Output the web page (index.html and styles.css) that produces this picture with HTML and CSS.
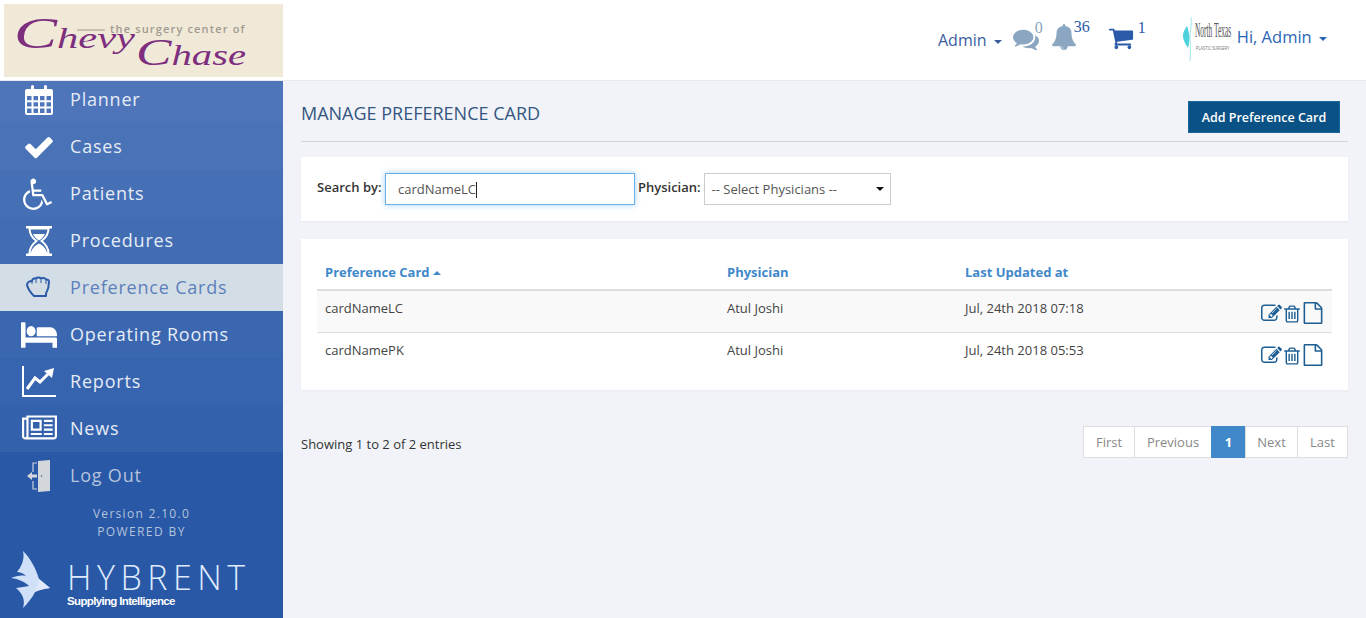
FILE: index.html
```html
<!DOCTYPE html>
<html lang="en">
<head>
    <meta charset="UTF-8">
    <meta name="viewport" content="width=device-width, initial-scale=1.0">
    <title>Manage Preference Card</title>
    <link rel="stylesheet" href="styles.css">
</head>
<body>
    <svg class="icon-defs" width="0" height="0">
        <symbol id="i-edit" viewBox="0 0 1792 1792"><path d="M888 1184l116-116-152-152-116 116v56h96v96h56zm440-720q-16-16-33 1l-350 350q-17 17-1 33t33-1l350-350q17-17 1-33zm80 594v190q0 119-84.500 203.500t-203.500 84.500h-832q-119 0-203.500-84.500t-84.500-203.500v-832q0-119 84.500-203.500t203.500-84.500h832q63 0 117 25 15 7 18 23 3 17-9 29l-49 49q-14 14-32 8-23-6-45-6h-832q-66 0-113 47t-47 113v832q0 66 47 113t113 47h832q66 0 113-47t47-113v-126q0-13 9-22l64-64q15-15 35-7t20 29zm-96-738l288 288-672 672h-288v-288zm444 132l-92 92-288-288 92-92q28-28 68-28t68 28l152 152q28 28 28 68t-28 68z"/></symbol>
        <symbol id="i-trash" viewBox="0 0 1792 1792"><path d="M704 736v576q0 14-9 23t-23 9h-64q-14 0-23-9t-9-23v-576q0-14 9-23t23-9h64q14 0 23 9t9 23zm256 0v576q0 14-9 23t-23 9h-64q-14 0-23-9t-9-23v-576q0-14 9-23t23-9h64q14 0 23 9t9 23zm256 0v576q0 14-9 23t-23 9h-64q-14 0-23-9t-9-23v-576q0-14 9-23t23-9h64q14 0 23 9t9 23zm128 724v-948h-896v948q0 22 7 40.500t14.500 27 10.500 8.500h832q3 0 10.500-8.500t14.500-27 7-40.500zm-672-1076h448l-48-117q-7-9-17-11h-317q-10 2-17 11zm928 32v64q0 14-9 23t-23 9h-96v948q0 83-47 143.500t-113 60.500h-832q-66 0-113-60.500t-47-141.500v-950h-96q-14 0-23-9t-9-23v-64q0-14 9-23t23-9h309l70-167q15-37 54-63t79-26h320q40 0 79 26t54 63l70 167h309q14 0 23 9t9 23z"/></symbol>
        <symbol id="i-file" viewBox="0 0 1792 1792"><path d="M1596 380q28 28 48 76t20 88v1152q0 40-28 68t-68 28h-1344q-40 0-68-28t-28-68v-1600q0-40 28-68t68-28h896q40 0 88 20t76 48zm-444-244v376h376q-10-29-22-41l-313-313q-12-12-41-22zm384 1528v-1024h-416q-40 0-68-28t-28-68v-416h-768v1536h1280z"/></symbol>
    </svg>

    <header class="topbar">
        <svg class="clinic-logo" viewBox="0 0 279 73" width="279" height="73">
            <rect width="279" height="73" fill="#f0e9d8"/>
            <line x1="73" y1="26" x2="101" y2="26" stroke="#a09a90" stroke-width="1"/>
            <text x="106" y="29" class="logo-small" textLength="135">the surgery center of</text>
            <text x="10" y="44" class="logo-script" textLength="121" lengthAdjust="spacingAndGlyphs"><tspan class="logo-cap">C</tspan>hevy</text>
            <text x="132" y="61" class="logo-script" textLength="110" lengthAdjust="spacingAndGlyphs"><tspan class="logo-cap-small">C</tspan>hase</text>
        </svg>
        <div class="top-links">
            <a class="top-role">Admin <span class="caret"></span></a>
            <svg class="top-icon icon-comments" viewBox="0 0 1792 1792" width="26" height="26"><path d="M1408 768q0 139-94 257t-256.500 186.500-353.500 68.500q-86 0-176-16-124 88-278 128-36 9-86 16h-3q-11 0-20.500-8t-11.500-21q-1-3-1-6.500t.5-6.500 2-6l2.500-5 3.500-5.500 4-5 4.500-5 4-4.500q5-6 23-25t26-29.500 22.500-29 25-38.500 20.500-44q-124-72-195-177t-71-224q0-139 94-257t256.500-186.500 353.500-68.500 353.500 68.500 256.500 186.500 94 257zm384 256q0 120-71 224.500t-195 176.500q10 24 20.500 44t25 38.500 22.500 29 26 29.500 23 25q1 1 4 4.500t4.500 5 4 5 3.500 5.500l2.500 5 2 6 .5 6.500-1 6.500q-3 14-13 22t-22 7q-50-7-86-16-154-40-278-128-90 16-176 16-271 0-472-132 58 4 88 4 161 0 309-45t264-129q125-92 192-212t67-254q0-77-23-152 129 71 204 178t75 230z"/></svg>
            <span class="count count-muted">0</span>
            <svg class="top-icon icon-bell" viewBox="0 0 1792 1792" width="26" height="26"><path d="M912 1696q0-16-16-16-59 0-101.500-42.500t-42.500-101.500q0-16-16-16t-16 16q0 73 51.500 124.500t124.500 51.500q16 0 16-16zm816-288q0 52-38 90t-90 38h-448q0 106-75 181t-181 75-181-75-75-181h-448q-52 0-90-38t-38-90q50-42 91-88t85-119.500 74.500-158.500 50-206 19.500-260q0-152 117-282.500t307-158.500q-8-19-8-39 0-40 28-68t68-28 68 28 28 68q0 20-8 39 190 28 307 158.500t117 282.500q0 139 19.500 260t50 206 74.500 158.500 85 119.500 91 88z"/></svg>
            <span class="count count-bell">36</span>
            <svg class="top-icon icon-cart" viewBox="0 0 1792 1792" width="26" height="26"><path d="M704 1536q0 52-38 90t-90 38-90-38-38-90 38-90 90-38 90 38 38 90zm896 0q0 52-38 90t-90 38-90-38-38-90 38-90 90-38 90 38 38 90zm128-1088v512q0 24-16.500 42.500t-40.500 21.500l-1044 122q13 60 13 70 0 16-24 64h920q26 0 45 19t19 45-19 45-45 19h-1024q-26 0-45-19t-19-45q0-11 8-31.500t16-36 21.500-40 15.500-29.500l-177-823h-204q-26 0-45-19t-19-45 19-45 45-19h256q16 0 28.500 6.500t19.500 15.500 13 24.500 8 26 5.500 29.500 4.500 26h1201q26 0 45 19t19 45z"/></svg>
            <span class="count count-cart">1</span>
            <svg class="user-logo" viewBox="0 0 50 44" width="50" height="44">
                <path d="M8 0c1 8-1 14-1 21s1 14 0 23" fill="none" stroke="#9fe6ec" stroke-width="1"/>
                <path d="M4 9c-6 8-5 13 1 22 2-8 2-14-1-22z" fill="#4fd0dd"/>
                <text transform="translate(12 20) scale(.37 1)" class="user-logo-name">North Texas</text>
                <text transform="translate(13 33) scale(.6 1)" class="user-logo-sub">PLASTIC SURGERY</text>
            </svg>
            <a class="top-user">Hi, Admin <span class="caret"></span></a>
        </div>
    </header>

    <div class="page">
        <aside class="sidebar">
            <ul class="nav">
                <li class="nav-item">
                    <span class="nav-icon">
                        <svg viewBox="0 0 28 30" width="28" height="30">
                            <path d="M2 4h4V1.500a1.500 1.500 0 0 1 3 0V4h10V1.500a1.500 1.500 0 0 1 3 0V4h4a2 2 0 0 1 2 2v4H0V6a2 2 0 0 1 2-2z"/>
                            <path d="M1 10h26v18a1 1 0 0 1-1 1H2a1 1 0 0 1-1-1zM7.500 10v19M14 10v19M20.500 10v19M1 16.300h26M1 22.600h26" class="stroke" stroke-width="2"/>
                        </svg>
                    </span>Planner
                </li>
                <li class="nav-item">
                    <span class="nav-icon"><svg viewBox="0 0 1792 1792" width="32" height="32"><path d="M1671 566q0 40-28 68l-724 724-136 136q-28 28-68 28t-68-28l-136-136-362-362q-28-28-28-68t28-68l136-136q28-28 68-28t68 28l294 295 656-657q28-28 68-28t68 28l136 136q28 28 28 68z"/></svg></span>Cases
                </li>
                <li class="nav-item">
                    <span class="nav-icon"><svg viewBox="0 0 1792 1792" width="32" height="32"><path d="M1023 1187l102 204q-58 179-210 290t-339 111q-156 0-288.500-77.500t-210-210-77.500-288.500q0-181 104.500-330t274.500-211l17 131q-122 54-195 165.500t-73 244.500q0 185 131.500 316.500t316.500 131.500q126 0 232.500-65t165-175.500 49.500-236.500zm548 100l58 114-256 128q-13 7-29 7-40 0-57-35l-239-477h-472q-24 0-42.500-16.500t-21.500-40.500l-96-779q-2-17 6-42 14-51 57-82.500t97-31.500q66 0 113 47t47 113q0 69-52 117.500t-120 41.500l37 289h423v128h-407l16 128h455q40 0 57 35l228 455z"/></svg></span>Patients
                </li>
                <li class="nav-item">
                    <span class="nav-icon">
                        <svg viewBox="0 0 26 30" width="26" height="30">
                            <path d="M0 0h26v2.500H0zM0 27.500h26V30H0z"/>
                            <path d="M3.500 2.500c0 6 3 9.500 7 12.500-4 3-7 6.500-7 12.500h19c0-6-3-9.500-7-12.500 4-3 7-6.500 7-12.500z" class="stroke" stroke-width="2"/>
                            <path d="M5 27c.5-4 4-7.500 8-9.500 4 2 7.500 5.500 8 9.500zM7 8h12c-1 2.500-3.500 5-6 6.500C10.500 13 8 10.500 7 8z"/>
                        </svg>
                    </span>Procedures
                </li>
                <li class="nav-item nav-item-active">
                    <span class="nav-icon">
                        <svg viewBox="0 0 28 24" width="28" height="24">
                            <path d="M2 9c0-2 2-4 5-4 0-2 2-3 4-2.500 1-1.300 4-1.300 5 0 1.500-1 4-.5 5 1 1.500-.3 3 .5 3 2.500 0 4-1 8-3 11.500v2.500H12L9 20C6 17 3 13 2 9z" class="stroke" stroke-width="2"/>
                            <path d="M7 5v3M11 3v4M16 3v4M21 4v4" class="stroke" stroke-width="1"/>
                        </svg>
                    </span>Preference Cards
                </li>
                <li class="nav-item">
                    <span class="nav-icon"><svg viewBox="0 0 2048 1792" width="36" height="36" preserveAspectRatio="none"><path d="M256 1024h1728q26 0 45 19t19 45v448h-256v-256h-1536v256h-256v-1216q0-26 19-45t45-19h128q26 0 45 19t19 45v704zm576-320q0-106-75-181t-181-75-181 75-75 181 75 181 181 75 181-75 75-181zm1216 256v-64q0-159-112.500-271.500t-271.500-112.500h-704q-26 0-45 19t-19 45v384h1152z"/></svg></span>Operating Rooms
                </li>
                <li class="nav-item">
                    <span class="nav-icon">
                        <svg viewBox="0 0 34 31" width="34" height="31">
                            <path d="M1 0v30h33" class="stroke" stroke-width="2"/>
                            <path d="M5 23l8-11 5 4 8-8" class="stroke" stroke-width="3"/>
                            <path d="M22 5l10-3-2 10z"/>
                        </svg>
                    </span>Reports
                </li>
                <li class="nav-item">
                    <span class="nav-icon"><svg viewBox="0 0 2048 1792" width="35" height="31"><path d="M1024 512h-384v384h384v-384zm128 640v128h-640v-128h640zm0-768v640h-640v-640h640zm640 768v128h-512v-128h512zm0-256v128h-512v-128h512zm0-256v128h-512v-128h512zm0-256v128h-512v-128h512zm-1536 960v-960h-128v960q0 26 19 45t45 19 45-19 19-45zm1664 0v-1088h-1536v1088q0 33-11 64h1483q26 0 45-19t19-45zm128-1216v1216q0 80-56 136t-136 56h-1664q-80 0-136-56t-56-136v-1088h256v-128h1792z"/></svg></span>News
                </li>
                <li class="nav-item nav-item-logout">
                    <span class="nav-icon">
                        <svg viewBox="0 0 24 32" width="24" height="32">
                            <path d="M11 1l12-1v31l-12 1z" fill="#d3d7dc"/>
                            <path d="M10 3H6v9M6 21v8h4" class="door-frame"/>
                            <path d="M0 16l5-4v2.500h5v3H5V20z" fill="#d3d7dc"/>
                            <circle cx="14.500" cy="16" r=".8" fill="#4a5f80"/>
                        </svg>
                    </span>Log Out
                </li>
            </ul>
            <div class="version">Version 2.10.0</div>
            <div class="powered">POWERED BY</div>
            <div class="brand">
                <svg class="brand-mark" viewBox="0 0 40 58" width="40" height="58">
                    <path d="M12 0C20 8 25 18 28 28L39 37C32 38 27 39 24 41 21 47 16 53 12 57 14 50 13 44 5 37 10 36 14 36 18 35 14 31 8 28 0 27 5 25 10 24 15 25 12 22 9 21 6 21 10 16 14 9 12 0z" fill="#cfe0f8"/>
                    <path d="M28 28L39 37C32 38 27 39 24 41 21 47 16 53 12 57 22 47 26 38 28 28z" fill="#dfe9fb"/>
                </svg>
                <div class="brand-text">
                    <div class="brand-name">HYBRENT</div>
                    <div class="brand-tag">Supplying Intelligence</div>
                </div>
            </div>
        </aside>

        <main class="content">
            <div class="title-row">
                <h1 class="page-title">MANAGE PREFERENCE CARD</h1>
                <button class="btn-add">Add Preference Card</button>
            </div>

            <div class="card search-card">
                <label class="field-label label-search">Search by:</label>
                <div class="search-input">cardNameLC<span class="text-cursor"></span></div>
                <label class="field-label label-physician">Physician:</label>
                <div class="select-box">-- Select Physicians --<span class="select-arrow"></span></div>
            </div>

            <div class="card table-card">
                <table class="cards-table">
                    <thead>
                        <tr>
                            <th class="col-name">Preference Card <span class="sort-up"></span></th>
                            <th class="col-physician">Physician</th>
                            <th class="col-date">Last Updated at</th>
                            <th></th>
                        </tr>
                    </thead>
                    <tbody>
                        <tr class="row-odd">
                            <td>cardNameLC</td>
                            <td>Atul Joshi</td>
                            <td>Jul, 24th 2018 07:18</td>
                            <td class="actions">
                                <svg width="21" height="21" class="act-edit"><use href="#i-edit"/></svg><svg width="20" height="20" class="act-trash"><use href="#i-trash"/></svg><svg width="22" height="22" class="act-file"><use href="#i-file"/></svg>
                            </td>
                        </tr>
                        <tr>
                            <td>cardNamePK</td>
                            <td>Atul Joshi</td>
                            <td>Jul, 24th 2018 05:53</td>
                            <td class="actions">
                                <svg width="21" height="21" class="act-edit"><use href="#i-edit"/></svg><svg width="20" height="20" class="act-trash"><use href="#i-trash"/></svg><svg width="22" height="22" class="act-file"><use href="#i-file"/></svg>
                            </td>
                        </tr>
                    </tbody>
                </table>
            </div>

            <div class="table-footer">
                <div class="entries-info">Showing 1 to 2 of 2 entries</div>
                <ul class="pagination">
                    <li class="page-first">First</li>
                    <li class="page-prev">Previous</li>
                    <li class="page-num active">1</li>
                    <li class="page-next">Next</li>
                    <li class="page-last">Last</li>
                </ul>
            </div>
        </main>
    </div>
</body>
</html>
```

FILE: styles.css
```css
* {
    box-sizing: border-box;
}

html, body {
    height: 100%;
}

body {
    margin: 0;
    font-family: "Open Sans", sans-serif;
    font-size: 13px;
    color: #333;
    background-color: #f1f3f8;
    display: flex;
    flex-direction: column;
    overflow: hidden;
}

.icon-defs {
    position: absolute;
}

/* top bar */
.topbar {
    height: 81px;
    flex-shrink: 0;
    background-color: #fff;
    border-bottom: 1px solid #e7e9ee;
    display: flex;
    justify-content: space-between;
    padding: 4px 0 0 4px;
}

.clinic-logo {
    display: block;
}

.logo-small {
    font-family: "Open Sans", sans-serif;
    font-size: 11px;
    font-weight: 600;
    fill: #a09a90;
    letter-spacing: 0.5px;
}

.logo-script {
    font-family: "Liberation Serif", serif;
    font-style: italic;
    font-size: 29px;
    fill: #7d2e7e;
}

.logo-cap {
    font-size: 44px;
}

.logo-cap-small {
    font-size: 38px;
}

.top-links {
    display: flex;
    align-items: flex-start;
    padding-right: 39px;
    color: #3560a8;
}

.top-role {
    font-size: 16px;
    margin: 25px 11px 0 0;
    color: #3b5c9e;
}

.top-user {
    font-size: 16.5px;
    margin: 21px 0 0 4px;
    color: #2a65b5;
}

.caret {
    display: inline-block;
    width: 0;
    height: 0;
    margin-left: 3px;
    vertical-align: middle;
    border-top: 4px solid;
    border-left: 4px solid transparent;
    border-right: 4px solid transparent;
}

.top-icon {
    fill: #8aa6c1;
    flex-shrink: 0;
}

.icon-comments {
    margin-top: 22px;
}

.icon-bell {
    margin: 20px 0 0 8px;
}

.icon-cart {
    margin: 21px 0 0 18px;
    fill: #2a5aa8;
}

.count {
    font-family: "Liberation Serif", serif;
    font-size: 16px;
    margin-top: 15px;
    color: #2a5aa8;
}

.count-muted {
    color: #8aa6c1;
    margin-left: -4px;
}

.count-bell {
    margin: 14px 0 0 -3px;
}

.count-cart {
    margin-left: 4px;
}

.user-logo {
    margin: 13px 0 0 37px;
    flex-shrink: 0;
}

.user-logo-name {
    font-family: "Liberation Serif", serif;
    font-size: 20px;
    fill: #555;
}

.user-logo-sub {
    font-family: "Liberation Sans", sans-serif;
    font-size: 6px;
    fill: #777;
}

/* page */
.page {
    flex: 1;
    display: flex;
    min-height: 0;
}

.sidebar {
    width: 283px;
    flex-shrink: 0;
    background-color: #2858a6;
    color: #e6ecf6;
    overflow: hidden;
}

.nav {
    list-style: none;
    margin: -5px 0 0;
    padding: 0;
}

.nav-item {
    height: 47px;
    padding-bottom: 2px;
    display: flex;
    align-items: center;
    font-size: 18px;
    letter-spacing: 0.8px;
    background-color: #3a67b0;
}

.nav-item:nth-child(1) { background-color: #4e75ba; }
.nav-item:nth-child(2) { background-color: #4a72b7; }
.nav-item:nth-child(3) { background-color: #4670b5; }
.nav-item:nth-child(4) { background-color: #426db3; }
.nav-item:nth-child(6) { background-color: #3a67b0; }
.nav-item:nth-child(7) { background-color: #3664ae; }
.nav-item:nth-child(8) { background-color: #3361ac; }

.nav-item-active.nav-item-active {
    background-color: #d3dde6;
    color: #5d80ba;
}

.nav-item-logout.nav-item-logout {
    background-color: transparent;
    color: #b5c3dc;
}

.nav-icon {
    width: 40px;
    margin: 2px 11px 0 19px;
    display: flex;
    justify-content: center;
    fill: #fff;
}

.nav-item-active .nav-icon {
    fill: none;
}

.stroke {
    fill: none;
    stroke: #fff;
}

.nav-item-active .stroke {
    stroke: #2a5aa8;
    stroke-linejoin: round;
}

.door-frame {
    fill: none;
    stroke: #c5cfdf;
    stroke-width: 1.2;
}

.version, .powered {
    text-align: center;
    font-size: 12px;
    line-height: 18px;
    color: #b5c3dc;
}

.version {
    margin-top: 6px;
    letter-spacing: 1.3px;
}

.powered {
    letter-spacing: 1.4px;
}

.brand {
    display: flex;
    margin: 10px 0 0 11px;
}

.brand-text {
    margin-left: 16px;
}

.brand-name {
    font-family: "Open Sans", sans-serif;
    font-weight: 300;
    font-size: 34px;
    line-height: 34px;
    letter-spacing: 5.5px;
    margin-top: 9px;
    white-space: nowrap;
    color: #dfeafc;
}

.brand-tag {
    font-family: "Liberation Sans", sans-serif;
    font-size: 11.5px;
    line-height: 14px;
    letter-spacing: -0.65px;
    color: #fff;
    font-weight: 700;
}

/* content */
.content {
    flex: 1;
    min-width: 0;
    padding: 0 18px;
}

.title-row {
    height: 61px;
    border-bottom: 1px solid #d2d4da;
    display: flex;
    justify-content: space-between;
    align-items: flex-start;
    padding: 20px 8px 0 0;
}

.page-title {
    margin: -1px 0 0;
    font-size: 18px;
    font-weight: 400;
    line-height: 26px;
    color: #34567f;
}

.btn-add {
    width: 152px;
    height: 32px;
    background-color: #0a5286;
    color: #fff;
    border: 1px solid #1a66a0;
    font-family: "Open Sans", sans-serif;
    font-size: 12.5px;
    font-weight: 600;
    padding: 0;
}

.card {
    background-color: #fff;
    box-shadow: 0 1px 2px rgba(0, 0, 0, 0.04);
}

.search-card {
    height: 64px;
    margin-top: 15px;
    padding: 16px;
    display: flex;
    align-items: flex-start;
}

.field-label {
    font-size: 13px;
    font-weight: 600;
    line-height: 28px;
}

.label-search {
    width: 68px;
}

.label-physician {
    margin: 0 3px;
}

.search-input {
    width: 250px;
    height: 32px;
    border: 1px solid #66afe9;
    box-shadow: 0 0 6px rgba(102, 175, 233, 0.6);
    padding-left: 12px;
    line-height: 30px;
    color: #555;
}

.text-cursor {
    display: inline-block;
    width: 1px;
    height: 16px;
    background-color: #222;
    vertical-align: -4px;
}

.select-box {
    width: 187px;
    height: 32px;
    border: 1px solid #ccc;
    padding: 0 0 0 7px;
    line-height: 30px;
    color: #555;
    font-size: 13px;
    display: flex;
    justify-content: space-between;
    align-items: center;
}

.select-arrow {
    width: 0;
    height: 0;
    margin: -1px 6px 0 0;
    border-top: 4px solid #111;
    border-left: 4px solid transparent;
    border-right: 4px solid transparent;
}

.table-card {
    height: 151px;
    margin-top: 18px;
    padding: 16px;
}

.cards-table {
    width: 100%;
    border-collapse: collapse;
    table-layout: fixed;
}

.cards-table th {
    text-align: left;
    height: 35px;
    padding: 0 8px 1px;
    color: #4088c9;
    font-weight: 700;
    border-bottom: 2px solid #ddd;
}

.col-name {
    width: 402px;
}

.col-physician {
    width: 238px;
}

.col-date {
    width: 240px;
}

.sort-up {
    display: inline-block;
    width: 0;
    height: 0;
    vertical-align: 2px;
    border-bottom: 4px solid #4088c9;
    border-left: 4px solid transparent;
    border-right: 4px solid transparent;
}

.cards-table td {
    height: 42px;
    padding: 0 8px 6px;
    border-bottom: 1px solid #ddd;
    color: #444;
}

.cards-table tr:last-child td {
    border-bottom: none;
}

.row-odd td {
    background-color: #f9f9f9;
}

.cards-table .actions {
    padding: 4px 8px 0 0;
    text-align: right;
    white-space: nowrap;
    line-height: 0;
}

.actions svg {
    fill: #1d5f94;
}

.table-footer {
    display: flex;
    justify-content: space-between;
    margin-top: 36px;
}

.entries-info {
    line-height: 36px;
    color: #333;
}

.pagination {
    list-style: none;
    display: flex;
    margin: 0;
    padding: 0;
    color: #888;
}

.pagination li {
    height: 32px;
    line-height: 30px;
    text-align: center;
    background-color: #fff;
    border: 1px solid #ddd;
    margin-left: -1px;
}

.page-first { width: 52px; }
.page-prev { width: 78px; }
.page-num { width: 35px; font-weight: 700; }
.page-next { width: 53px; }
.page-last { width: 51px; }

.pagination .active {
    background-color: #4088c9;
    border-color: #4088c9;
    color: #fff;
}
```
